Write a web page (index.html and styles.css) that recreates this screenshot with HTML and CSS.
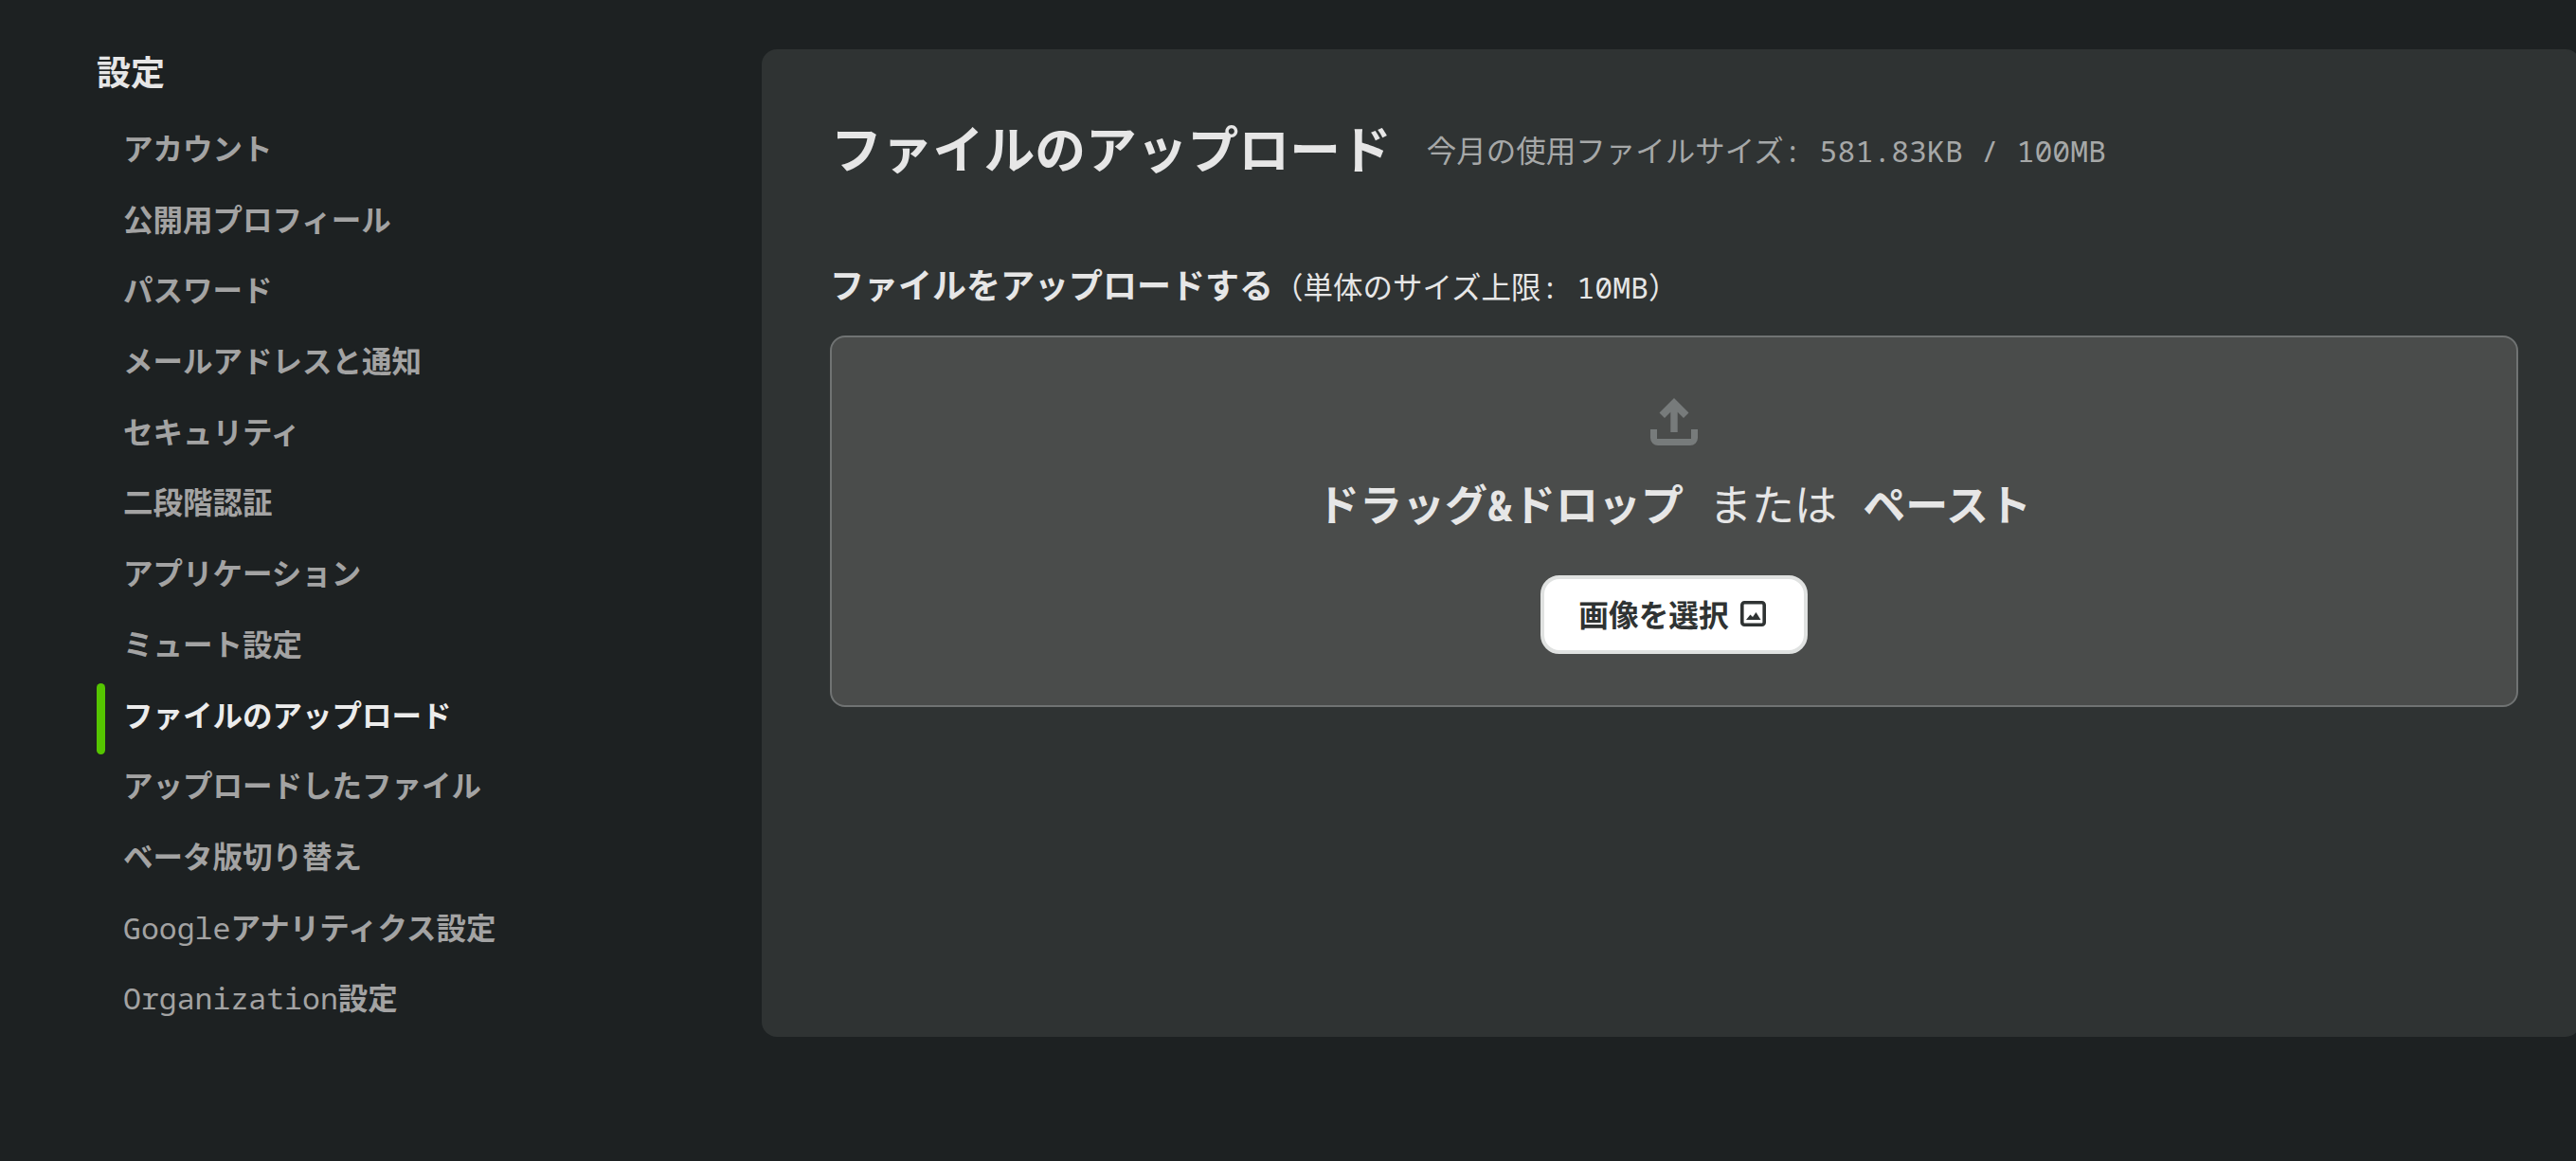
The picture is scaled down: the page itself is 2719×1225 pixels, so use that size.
FILE: index.html
```html
<!DOCTYPE html>
<html lang="ja">
<head>
  <meta charset="UTF-8">
  <title>ファイルのアップロード</title>
  <link rel="stylesheet" href="styles.css">
</head>
<body>
  <div class="layout">
    <nav class="sidebar">
      <h2 class="sidebar-title">設定</h2>
      <ul class="menu">
        <li class="menu-item">アカウント</li>
        <li class="menu-item">公開用プロフィール</li>
        <li class="menu-item">パスワード</li>
        <li class="menu-item">メールアドレスと通知</li>
        <li class="menu-item">セキュリティ</li>
        <li class="menu-item">二段階認証</li>
        <li class="menu-item">アプリケーション</li>
        <li class="menu-item">ミュート設定</li>
        <li class="menu-item active">ファイルのアップロード</li>
        <li class="menu-item">アップロードしたファイル</li>
        <li class="menu-item">ベータ版切り替え</li>
        <li class="menu-item"><span class="latin">Google</span>アナリティクス設定</li>
        <li class="menu-item"><span class="latin">Organization</span>設定</li>
      </ul>
    </nav>
    <main class="panel">
      <div class="panel-head">
        <h1 class="panel-title">ファイルのアップロード</h1>
        <span class="usage">今月の使用ファイルサイズ: 581.83KB / 100MB</span>
      </div>
      <div class="upload-label"><b>ファイルをアップロードする</b><span class="limit">（単体のサイズ上限: 10MB）</span></div>
      <div class="dropzone">
        <svg class="upload-icon" viewBox="0 0 50 50" width="50" height="50">
          <path d="M25 0L40.5 15.5L35 21L28.7 14.7V36H21.3V14.7L15 21L9.5 15.5Z"/>
          <path d="M0 33H7V43H43V33H50V42A8 8 0 0 1 42 50H8A8 8 0 0 1 0 42Z"/>
        </svg>
        <p class="drop-text"><b>ドラッグ&amp;ドロップ</b> または <b>ペースト</b></p>
        <button class="pick-btn">画像を選択
          <svg class="image-icon" viewBox="0 0 27 27" width="27" height="27">
            <rect x="1.800" y="1.800" width="23.400" height="23.400" rx="2.500" fill="none" stroke="#2f3333" stroke-width="3.600"/>
            <path d="M6 20L10.500 14.500L13 17L16.500 12L21.500 20Z" fill="#2f3333"/>
          </svg>
        </button>
      </div>
    </main>
  </div>
</body>
</html>
```

FILE: styles.css
```css
html, body {
  margin: 0;
  padding: 0;
  height: 100%;
  overflow: hidden;
  background: #1d2122;
}
body {
  font-family: "Noto Sans Mono", "DejaVu Sans Mono", "Noto Sans CJK JP", monospace;
  color: #e6e6e6;
}
.layout {
  display: flex;
  width: 2724px;
  padding-top: 52px;
  align-items: flex-start;
}
.sidebar {
  width: 702px;
  margin-left: 102px;
  flex-shrink: 0;
}
.sidebar-title {
  margin: 0;
  height: 71px;
  padding-top: 1px;
  box-sizing: border-box;
  font-size: 36px;
  line-height: 48px;
  font-weight: 700;
  color: #e6e6e6;
}
.menu {
  list-style: none;
  margin: 0;
  padding: 0;
}
.menu-item {
  position: relative;
  height: 74.7px;
  padding: 11px 0 0 28px;
  box-sizing: border-box;
  font-size: 31.5px;
  line-height: 46px;
  font-weight: 700;
  color: #a3a3a3;
  white-space: nowrap;
}
.latin {
  font-weight: 400;
}
.menu-item.active {
  color: #ececec;
}
.menu-item.active::before {
  content: "";
  position: absolute;
  left: 0;
  top: 0;
  width: 9px;
  height: 75px;
  border-radius: 5px;
  background: #55c500;
}
.panel {
  flex: 1;
  height: 1042px;
  box-sizing: border-box;
  padding: 26px 66px 0 72px;
  background: #2f3333;
  border-radius: 16px;
}
.panel-head {
  display: flex;
  align-items: center;
  height: 106px;
  padding: 26px 0 0 1px;
}
.panel-title {
  margin: 0;
  font-size: 53.8px;
  line-height: 72px;
  font-weight: 700;
  color: #e6e6e6;
}
.usage {
  margin-left: 37px;
  font-size: 31.5px;
  color: #a6a8a8;
}
.upload-label {
  margin-top: 68px;
  height: 76px;
  font-size: 36px;
  line-height: 48px;
  color: #e6e6e6;
}
.limit {
  font-size: 31.5px;
  font-weight: 400;
}
.dropzone {
  display: flex;
  flex-direction: column;
  align-items: center;
  height: 392px;
  box-sizing: border-box;
  padding-top: 64px;
  background: #4a4c4b;
  border: 2px solid #707373;
  border-radius: 16px;
}
.upload-icon {
  fill: #777b7b;
}
.drop-text {
  margin: 27px 0 0;
  font-size: 45px;
  line-height: 72px;
  color: #e6e6e6;
  white-space: pre-wrap;
}
.pick-btn {
  display: flex;
  align-items: center;
  justify-content: center;
  gap: 12px;
  box-sizing: border-box;
  width: 282px;
  height: 83px;
  margin-top: 38px;
  padding: 0 4px 4px 0;
  background: #ffffff;
  border: 4px solid #e0e2e1;
  border-radius: 20px;
  font-family: inherit;
  font-size: 31.7px;
  font-weight: 700;
  color: #2f3333;
}
.image-icon {
  margin-top: 2px;
}
```
